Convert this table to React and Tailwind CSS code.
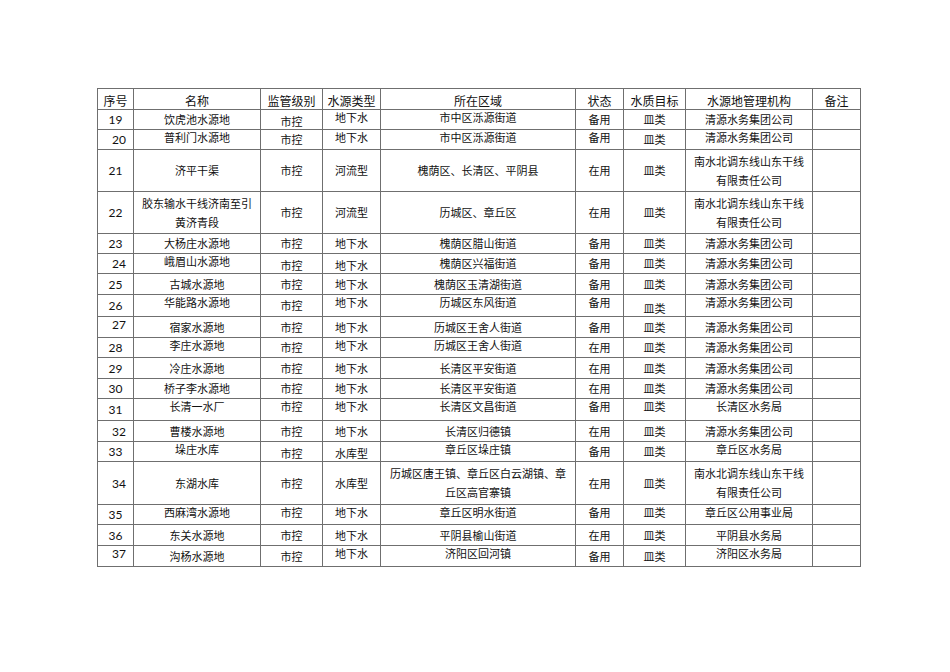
import React from "react";

const ORG = "清源水务集团公司";
const NSBD = ["南水北调东线山东干线", "有限责任公司"];

// v: vertical alignment per column (t = top, m = middle, b = bottom)
const rows = [
  { n: "19", name: "饮虎池水源地", type: "地下水", area: "市中区泺源街道", st: "备用", org: ORG, h: "h-[20px]", v: "mmbttmmm" },
  { n: "20", shift: true, name: "普利门水源地", type: "地下水", area: "市中区泺源街道", st: "备用", org: ORG, h: "h-[20px]", v: "mtmtttmt" },
  { n: "21", name: "济平干渠", type: "河流型", area: "槐荫区、长清区、平阴县", st: "在用", org: NSBD, h: "h-[42px]", v: "mmmmmmmm" },
  { n: "22", name: ["胶东输水干线济南至引", "黄济青段"], type: "河流型", area: "历城区、章丘区", st: "在用", org: NSBD, h: "h-[42px]", v: "mmmmmmmm" },
  { n: "23", name: "大杨庄水源地", type: "地下水", area: "槐荫区腊山街道", st: "备用", org: ORG, h: "h-[20px]", v: "mmmmmmmm" },
  { n: "24", shift: true, name: "峨眉山水源地", type: "地下水", area: "槐荫区兴福街道", st: "备用", org: ORG, h: "h-[20px]", v: "mtbbmmmm" },
  { n: "25", name: "古城水源地", type: "地下水", area: "槐荫区玉清湖街道", st: "备用", org: ORG, h: "h-[21px]", v: "mmmmmmmm" },
  { n: "26", name: "华能路水源地", type: "地下水", area: "历城区东风街道", st: "备用", org: ORG, h: "h-[22px]", v: "mtmtttbt" },
  { n: "27", shift: true, name: "宿家水源地", type: "地下水", area: "历城区王舍人街道", st: "备用", org: ORG, h: "h-[21px]", v: "tmmmmmmm" },
  { n: "28", name: "李庄水源地", type: "地下水", area: "历城区王舍人街道", st: "在用", org: ORG, h: "h-[20px]", v: "mtmttmmm" },
  { n: "29", name: "冷庄水源地", type: "地下水", area: "长清区平安街道", st: "在用", org: ORG, h: "h-[21px]", v: "mmmmmmmm" },
  { n: "30", name: "桥子李水源地", type: "地下水", area: "长清区平安街道", st: "在用", org: ORG, h: "h-[20px]", v: "mmmmmmmm" },
  { n: "31", name: "长清一水厂", type: "地下水", area: "长清区文昌街道", st: "备用", org: "长清区水务局", h: "h-[22px]", v: "mttttttt" },
  { n: "32", shift: true, name: "曹楼水源地", type: "地下水", area: "长清区归德镇", st: "在用", org: ORG, h: "h-[21px]", v: "mmmmmmmm" },
  { n: "33", name: "垛庄水库", type: "水库型", area: "章丘区垛庄镇", st: "备用", org: "章丘区水务局", h: "h-[20px]", v: "mtbbtmmt" },
  { n: "34", shift: true, name: "东湖水库", type: "水库型", area: ["历城区唐王镇、章丘区白云湖镇、章", "丘区高官寨镇"], st: "在用", org: NSBD, h: "h-[43px]", v: "mmmmmmmm" },
  { n: "35", name: "西麻湾水源地", type: "地下水", area: "章丘区明水街道", st: "备用", org: "章丘区公用事业局", h: "h-[20px]", v: "mttttttt" },
  { n: "36", name: "东关水源地", type: "地下水", area: "平阴县榆山街道", st: "在用", org: "平阴县水务局", h: "h-[21px]", v: "mmmmmmmm" },
  { n: "37", shift: true, name: "沟杨水源地", type: "地下水", area: "济阳区回河镇", st: "备用", org: "济阳区水务局", h: "h-[21px]", v: "tmmttmmt" },
];

const align = { t: "align-top", m: "align-middle", b: "align-bottom" };

const Text = ({ value }) => {
  if (Array.isArray(value)) {
    return (
      <div className="leading-[19px]">
        {value.map((line, i) => (
          <div key={i}>{line}</div>
        ))}
      </div>
    );
  }
  return <div className="leading-[15px]">{value}</div>;
};

const Cell = ({ v, children, className = "" }) => (
  <td className={`border border-[#6f6f6f] p-0 text-center ${align[v]} ${className}`}>
    {children}
  </td>
);

const headers = ["序号", "名称", "监管级别", "水源类型", "所在区域", "状态", "水质目标", "水源地管理机构", "备注"];

export default function App() {
  return (
    <div
      className="min-h-screen w-[950px] bg-white pl-[97px] pt-[88px] text-[#111]"
      style={{ fontFamily: '"Noto Sans CJK SC", "Noto Sans", sans-serif' }}
    >
      <table className="w-[763px] table-fixed border-collapse text-[11px]">
        <colgroup>
          <col className="w-[36px]" />
          <col className="w-[127px]" />
          <col className="w-[62px]" />
          <col className="w-[58px]" />
          <col className="w-[195px]" />
          <col className="w-[48px]" />
          <col className="w-[62px]" />
          <col className="w-[127px]" />
          <col className="w-[48px]" />
        </colgroup>
        <thead>
          <tr className="h-[21px]">
            {headers.map((h) => (
              <th
                key={h}
                className="border border-[#6f6f6f] p-0 pb-[1px] text-center align-bottom text-[12px] font-normal leading-[15px]"
              >
                {h}
              </th>
            ))}
          </tr>
        </thead>
        <tbody>
          {rows.map((r) => (
            <tr key={r.n} className={r.h}>
              <Cell v={r.v[0]} className={r.shift ? "pl-[7px]" : ""}>
                <div
                  className="text-[12px] leading-[15px]"
                  style={{ fontFamily: "Lato, sans-serif" }}
                >
                  {r.n}
                </div>
              </Cell>
              <Cell v={r.v[1]}>
                <Text value={r.name} />
              </Cell>
              <Cell v={r.v[2]}>
                <Text value="市控" />
              </Cell>
              <Cell v={r.v[3]}>
                <Text value={r.type} />
              </Cell>
              <Cell v={r.v[4]}>
                <Text value={r.area} />
              </Cell>
              <Cell v={r.v[5]}>
                <Text value={r.st} />
              </Cell>
              <Cell v={r.v[6]}>
                <Text value="皿类" />
              </Cell>
              <Cell v={r.v[7]}>
                <Text value={r.org} />
              </Cell>
              <Cell v="m" />
            </tr>
          ))}
        </tbody>
      </table>
    </div>
  );
}
